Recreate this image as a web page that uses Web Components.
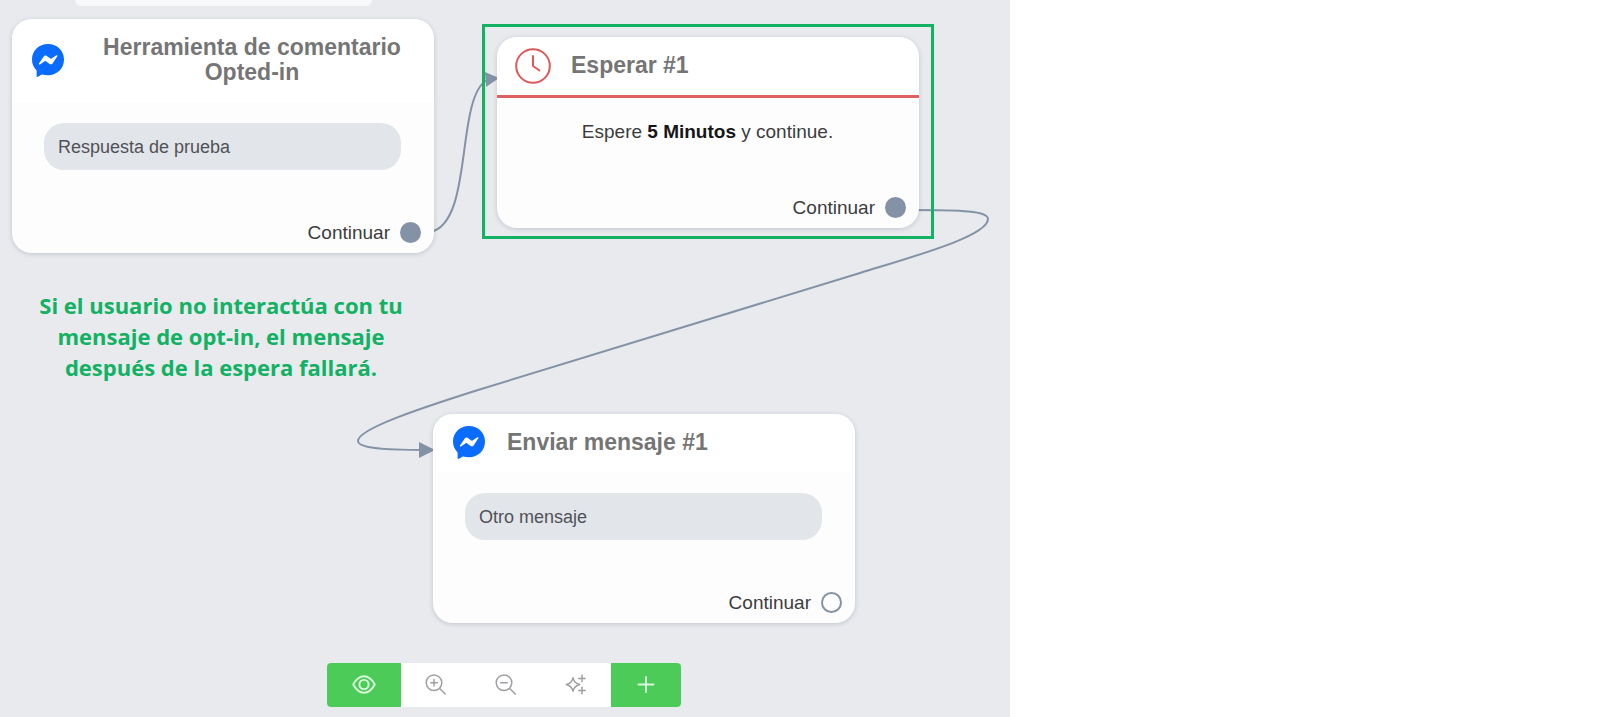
<!DOCTYPE html>
<html lang="es">
<head>
<meta charset="utf-8">
<meta name="viewport" content="width=device-width, initial-scale=1">
<title>Flujo</title>
<style>
    body {
        margin: 0;
        background: #fff;
        font-family: "Liberation Sans", Arial, sans-serif;
    }
</style>
</head>
<body>
<flow-app></flow-app>

<script>
const ICONS = {
    messenger: `
        <svg viewBox="0 1 34 34" width="34" height="34" aria-hidden="true">
            <path fill="#0a6cff" d="M17 1C7.800 1 1 7.700 1 16.600c0 4.600 1.600 8 4.600 10.800V33c0 .8.600 1.100 1.300.8l3.900-2.200c1.900.5 4.100.7 6.200.7 9.200 0 16-6.800 16-15.700S26.200 1 17 1z"/>
            <path fill="#fff" d="M8 20.600l4.700-7.200c.7-1 2-1.200 3-.5l3.700 2.700c.4.300.8.300 1.200 0l4.800-3.300c.6-.4 1.300.2.900.9l-4.700 7.200c-.7 1-2 1.200-3 .5l-3.700-2.700c-.4-.3-.8-.3-1.200 0l-4.800 3.300c-.6.400-1.300-.2-.9-.9z"/>
        </svg>`,
    clock: `
        <svg viewBox="0 0 36 36" width="36" height="36" fill="none" stroke="#dc5a5c" stroke-width="2" stroke-linecap="round" stroke-linejoin="round" aria-hidden="true">
            <circle cx="18" cy="18" r="16.800"/>
            <path d="M18 8v10l6.500 4.500"/>
        </svg>`,
    eye: `
        <svg viewBox="0 0 24 24" width="24" height="24" fill="none" stroke="currentColor" stroke-width="1.900" stroke-linejoin="round">
            <path d="M1.200 11.500C4.200 6 7.900 3.300 12 3.300s7.800 2.700 10.800 8.200c-3 5.500-6.700 8.200-10.800 8.200S4.200 17 1.200 11.500z"/>
            <circle cx="12" cy="11.500" r="4.600"/>
        </svg>`,
    zoomIn: `
        <svg viewBox="0 0 24 24" width="24" height="24" fill="none" stroke="currentColor" stroke-width="1.500" stroke-linecap="round">
            <circle cx="10" cy="9.800" r="7.800"/>
            <path d="M15.700 15.500l5.600 5.500M10 6.500v6.600M6.700 9.800h6.600"/>
        </svg>`,
    zoomOut: `
        <svg viewBox="0 0 24 24" width="24" height="24" fill="none" stroke="currentColor" stroke-width="1.500" stroke-linecap="round">
            <circle cx="10" cy="9.800" r="7.800"/>
            <path d="M15.700 15.500l5.600 5.500M6.700 9.800h6.600"/>
        </svg>`,
    sparkles: `
        <svg viewBox="0 0 24 24" width="24" height="24" fill="none" stroke="currentColor" stroke-width="1.500" stroke-linejoin="round" stroke-linecap="round">
            <path d="M9 4.800c.9 3.800 2.600 5.600 6.700 6.700-4.100 1.100-5.800 2.900-6.700 6.700-.9-3.800-2.600-5.600-6.700-6.700C6.400 10.400 8.100 8.600 9 4.800z"/>
            <path d="M18 2.300v6.400M14.800 5.500h6.400M18 14.300v6.400M14.800 17.500h6.400"/>
        </svg>`,
    plus: `
        <svg viewBox="0 0 24 24" width="24" height="24" fill="none" stroke="currentColor" stroke-width="1.900" stroke-linecap="round">
            <path d="M12 4v15M4.500 11.500h15"/>
        </svg>`
};

// Tarjeta de un paso del flujo
class FlowNode extends HTMLElement {
    constructor() {
        super();
        this.attachShadow({ mode: "open" });
    }

    connectedCallback() {
        const icon = this.getAttribute("icon");

        this.shadowRoot.innerHTML = `
            <style>
                :host {
                    display: block;
                    width: 422px;
                    border-radius: 20px;
                    background: #fdfdfd;
                    box-shadow: 0 1px 5px rgba(60, 70, 90, 0.22);
                    overflow: hidden;
                }

                header {
                    display: flex;
                    align-items: center;
                    gap: 20px;
                    padding: 0 16px 0 18px;
                    background: #fff;
                }

                :host([icon="clock"]) header {
                    border-bottom: 3px solid #e05f60;
                }

                .icono {
                    display: flex;
                    flex: none;
                    justify-content: center;
                    width: 36px;
                }

                h2 {
                    flex: 1;
                    margin: 0;
                    padding: 16px 0 17px;
                    font-size: 23px;
                    line-height: 25px;
                    color: #757575;
                }

                :host([centered]) h2 {
                    text-align: center;
                }

                .cuerpo {
                    padding: 21px 33px 0 32px;
                }

                footer {
                    display: flex;
                    align-items: center;
                    justify-content: flex-end;
                    gap: 10px;
                    margin-top: 52px;
                    padding: 0 13px 10px;
                    font-size: 19px;
                    line-height: 21px;
                    color: #3c3c3e;
                }

                .puerto {
                    box-sizing: border-box;
                    width: 21px;
                    height: 21px;
                    border: 2px solid #8492a6;
                    border-radius: 50%;
                    background: #8492a6;
                }

                :host([open-port]) .puerto {
                    background: #fff;
                }
            </style>

            <header>
                <span class="icono">${ICONS[icon]}</span>
                <h2><slot name="titulo"></slot></h2>
            </header>
            <div class="cuerpo"><slot></slot></div>
            <footer>
                <span>Continuar</span>
                <span class="puerto"></span>
            </footer>
        `;
    }
}

// Globo con el texto del mensaje
class MessageBubble extends HTMLElement {
    constructor() {
        super();
        this.attachShadow({ mode: "open" });
        this.shadowRoot.innerHTML = `
            <style>
                :host {
                    display: block;
                    padding: 12px 14px 11px;
                    border-radius: 20px;
                    background: #e2e5ea;
                    font-size: 18px;
                    line-height: 24px;
                    color: #505256;
                }
            </style>
            <slot></slot>
        `;
    }
}

class WaitText extends HTMLElement {
    constructor() {
        super();
        this.attachShadow({ mode: "open" });
        this.shadowRoot.innerHTML = `
            <style>
                :host {
                    display: block;
                    text-align: center;
                    font-size: 19px;
                    line-height: 26px;
                    color: #3c3c3e;
                }

                ::slotted(b) {
                    color: #161618;
                }
            </style>
            <slot></slot>
        `;
    }
}

// Conexiones entre tarjetas
class FlowWires extends HTMLElement {
    constructor() {
        super();
        this.attachShadow({ mode: "open" });
        this.shadowRoot.innerHTML = `
            <style>
                :host {
                    display: block;
                    pointer-events: none;
                }

                svg {
                    display: block;
                    width: 100%;
                    height: 100%;
                }

                .linea {
                    fill: none;
                    stroke: #8492a6;
                    stroke-width: 2;
                }

                .flecha {
                    fill: #8492a6;
                }
            </style>
            <svg aria-hidden="true">
                <path class="linea" d="M430 232C474 224 455 98 487 80"/>
                <path class="flecha" d="M485 72l14 6-13 9z"/>
                <path class="linea" d="M910 210C962 210 988 211 988 219C988 236 915 256 860 273L478 390C418 409 358 429 358 441C358 450 402 450 424 450"/>
                <path class="flecha" d="M419 442l16 8-16 8z"/>
            </svg>
        `;
    }
}

class CanvasToolbar extends HTMLElement {
    constructor() {
        super();
        this.attachShadow({ mode: "open" });
        this.shadowRoot.innerHTML = `
            <style>
                :host {
                    display: flex;
                    border-radius: 4px;
                    background: #fff;
                    overflow: hidden;
                }

                button {
                    display: flex;
                    align-items: center;
                    justify-content: center;
                    width: 70px;
                    height: 44px;
                    margin: 0;
                    padding: 0;
                    border: 0;
                    background: none;
                    color: #a0a0a4;
                    cursor: pointer;
                }

                .verde {
                    background: #4dcb58;
                    color: #d8f8dc;
                }

                .vista {
                    width: 74px;
                }
            </style>
            <button type="button" class="verde vista" aria-label="Vista previa">${ICONS.eye}</button>
            <button type="button" aria-label="Acercar">${ICONS.zoomIn}</button>
            <button type="button" aria-label="Alejar">${ICONS.zoomOut}</button>
            <button type="button" aria-label="Ordenar">${ICONS.sparkles}</button>
            <button type="button" class="verde" aria-label="Agregar">${ICONS.plus}</button>
        `;
    }
}

class FlowApp extends HTMLElement {
    constructor() {
        super();
        this.attachShadow({ mode: "open" });
    }

    connectedCallback() {
        this.renderizar();
    }

    renderizar() {
        this.shadowRoot.innerHTML = `
            <style>
                :host {
                    display: grid;
                    grid-template-columns: 101fr 59fr;
                    min-height: 100vh;
                }

                main {
                    position: relative;
                    display: flex;
                    align-items: flex-end;
                    justify-content: center;
                    box-sizing: border-box;
                    padding: 0 2px 10px 0;
                    background: #e8eaee;
                    overflow: hidden;
                }

                flow-wires {
                    position: absolute;
                    inset: 0;
                }

                flow-node,
                .pestana,
                .marco,
                .nota {
                    position: absolute;
                }

                .pestana {
                    top: 0;
                    left: 75px;
                    width: 297px;
                    height: 6px;
                    border-radius: 0 0 8px 8px;
                    background: #f8f9fa;
                }

                .entrada { left: 12px; top: 19px; }
                .espera { left: 497px; top: 37px; }
                .envio { left: 433px; top: 414px; }

                .marco {
                    left: 482px;
                    top: 24px;
                    box-sizing: border-box;
                    width: 452px;
                    height: 215px;
                    border: 3px solid #12b163;
                }

                .nota {
                    left: 31px;
                    top: 290px;
                    width: 380px;
                    margin: 0;
                    text-align: center;
                    font: 700 22px/31px "Open Sans", "Noto Sans", sans-serif;
                    color: #12b163;
                }

                canvas-toolbar {
                    position: relative;
                }
            </style>

            <main>
                <div class="pestana"></div>
                <flow-wires></flow-wires>

                <flow-node class="entrada" icon="messenger" centered>
                    <span slot="titulo">Herramienta de comentario Opted-in</span>
                    <message-bubble>Respuesta de prueba</message-bubble>
                </flow-node>

                <flow-node class="espera" icon="clock">
                    <span slot="titulo">Esperar #1</span>
                    <wait-text>Espere <b>5 Minutos</b> y continue.</wait-text>
                </flow-node>

                <flow-node class="envio" icon="messenger" open-port>
                    <span slot="titulo">Enviar mensaje #1</span>
                    <message-bubble>Otro mensaje</message-bubble>
                </flow-node>

                <div class="marco"></div>
                <p class="nota">Si el usuario no interactúa con tu mensaje de opt-in, el mensaje después de la espera fallará.</p>

                <canvas-toolbar></canvas-toolbar>
            </main>
        `;
    }
}

customElements.define("flow-node", FlowNode);
customElements.define("message-bubble", MessageBubble);
customElements.define("wait-text", WaitText);
customElements.define("flow-wires", FlowWires);
customElements.define("canvas-toolbar", CanvasToolbar);
customElements.define("flow-app", FlowApp);
</script>
</body>
</html>
